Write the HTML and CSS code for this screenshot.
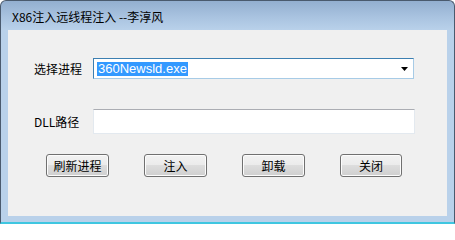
FILE: index.html
```html
<!DOCTYPE html>
<html>
<head>
<meta charset="utf-8">
<link rel="stylesheet" href="styles.css">
</head>
<body>
<div class="window">
  <div class="titlebar"><span class="title">X86注入远线程注入 --李淳风</span></div>
  <div class="client">
    <div class="row row-proc">
      <span class="label">选择进程</span>
      <div class="combo">
        <span class="sel">360Newsld.exe</span>
        <svg class="arrow" width="7" height="4" viewBox="0 0 7 4"><path d="M0 0H7L3.5 4Z" fill="#000"/></svg>
      </div>
    </div>
    <div class="row row-dll">
      <span class="label">DLL路径</span>
      <div class="edit"></div>
    </div>
    <div class="buttons">
      <button class="btn">刷新进程</button>
      <button class="btn">注入</button>
      <button class="btn">卸载</button>
      <button class="btn btn-last">关闭</button>
    </div>
  </div>
</div>
</body>
</html>
```

FILE: styles.css
```css
html, body {
  margin: 0;
  padding: 0;
  width: 455px;
  height: 224px;
  overflow: hidden;
  background: #ffffff;
}
.window {
  box-sizing: border-box;
  width: 455px;
  height: 224px;
  border: 1px solid #4a5a6e;
  border-bottom: 2px solid #3fc6e0;
  border-radius: 6px 6px 0 0;
  background: linear-gradient(to bottom, #93afd0 0px, #a9c3e0 16px, #b9d1ea 29px, #b9d1ea 100%);
  padding: 0 7px 6px 7px;
  display: flex;
  flex-direction: column;
  font-family: "Noto Sans CJK SC", "Liberation Sans", sans-serif;
  font-size: 12px;
  color: #000;
}
.titlebar {
  height: 29px;
  flex: none;
  display: flex;
  align-items: flex-start;
}
.title {
  padding: 8px 0 0 4px;
  font-size: 12px;
  line-height: 16px;
  color: #000;
}
.client {
  flex: 1;
  background: #f0f0f0;
  display: flex;
  flex-direction: column;
}
.row {
  display: flex;
  align-items: center;
}
.label {
  width: 59px;
  margin-left: 26px;
  font-size: 12px;
  line-height: 16px;
  flex: none;
}
.row-proc {
  margin-top: 28px;
  height: 21px;
}
.combo {
  box-sizing: border-box;
  width: 321px;
  height: 21px;
  background: #fff;
  border: 1px solid #a7cbe6;
  border-top-color: #3c7fb1;
  border-left-color: #3c7fb1;
  display: flex;
  align-items: center;
  padding-left: 3px;
  position: relative;
}
.sel {
  background: #3399ff;
  color: #fff;
  font-family: "Liberation Sans", "DejaVu Sans", sans-serif;
  font-size: 13px;
  line-height: 14px;
  padding: 0 1px;
}
.arrow {
  margin-left: auto;
  margin-right: 5px;
}
.row-dll {
  margin-top: 30px;
  height: 25px;
}
.edit {
  box-sizing: border-box;
  width: 322px;
  height: 25px;
  background: #fff;
  border: 1px solid #e3e9ef;
  border-top-color: #abadb3;
}
.buttons {
  margin-top: 20px;
  margin-left: 38px;
  display: flex;
  gap: 35px;
}
.btn {
  box-sizing: border-box;
  width: 63px;
  height: 23px;
  border: 1px solid #707070;
  border-radius: 3px;
  background: linear-gradient(to bottom, #f2f2f2 0%, #ebebeb 50%, #dddddd 50%, #cfcfcf 100%);
  box-shadow: inset 0 0 0 1px #fcfcfc;
  font-family: "Noto Sans CJK SC", sans-serif;
  font-size: 12px;
  line-height: 16px;
  color: #000;
  padding: 0;
}
.btn-last {
  width: 62px;
}
```
